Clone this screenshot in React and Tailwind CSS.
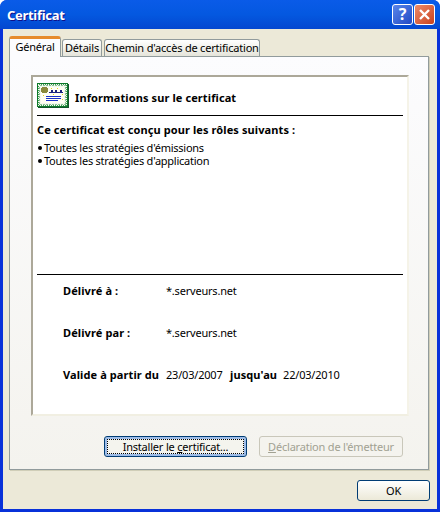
import React from "react";

const font = { fontFamily: '"Noto Sans", Tahoma, sans-serif' };

function Cert() {
  return (
    <svg width="32" height="25" viewBox="0 0 32 25" shapeRendering="crispEdges" className="shrink-0">
      <rect x="0" y="0" width="31" height="24" fill="#0d7a2a" />
      <rect x="31" y="1" width="1" height="24" fill="#14532d" />
      <rect x="1" y="24" width="31" height="1" fill="#14532d" />
      <rect x="1" y="1" width="29" height="22" fill="#f4f8ee" />
      <rect x="1.5" y="1.5" width="28" height="21" fill="none" stroke="#3f9a55" strokeWidth="1" strokeDasharray="1 1" />
      <rect x="2.5" y="2.5" width="26" height="19" fill="none" stroke="#8ac496" strokeWidth="1" strokeDasharray="2 1" />
      <rect x="4" y="4" width="23" height="16" fill="#fffff4" />
      <rect x="5" y="4" width="5" height="6" fill="#8a8a3c" />
      <rect x="4" y="5" width="7" height="4" fill="#8a8a3c" />
      <path d="M12 9h2V7h2v2h2V7h2v2h3V7h2v2h1v1H12z" fill="#1a237e" />
      <rect x="9" y="13" width="15" height="1" fill="#1a33c8" />
      <rect x="9" y="15" width="15" height="1" fill="#1a33c8" />
      <rect x="9" y="17" width="12" height="1" fill="#1a33c8" />
      <rect x="14" y="5" width="1" height="1" fill="#e5d820" />
      <rect x="20" y="5" width="1" height="1" fill="#e5d820" />
      <rect x="25" y="11" width="1" height="1" fill="#e5d820" />
      <rect x="6" y="12" width="1" height="1" fill="#e5d820" />
      <rect x="25" y="16" width="1" height="1" fill="#e5d820" />
      <rect x="16" y="11" width="1" height="1" fill="#e5d820" />
    </svg>
  );
}

function Field({ label, value, className }) {
  return (
    <div className={"flex " + className}>
      <span className="w-[103px] font-bold tracking-[0.1px]">{label}</span>
      <span>{value}</span>
    </div>
  );
}

function Bullet({ children }) {
  return (
    <div className="flex h-[13px] items-center tracking-[-0.25px]">
      <div className="w-[4px] h-[4px] rounded-full bg-black ml-[1px] mr-[2px] shrink-0" />
      <span>{children}</span>
    </div>
  );
}

export default function App() {
  return (
    <div style={font} className="w-[440px] h-[512px] overflow-hidden flex flex-col bg-[#0831d9] rounded-t-[7px] text-[11px] leading-[13px] tracking-[-0.2px] text-black">
      <div className="h-[29px] shrink-0 flex items-center pl-[7px] pr-[5px] bg-gradient-to-b from-[#0a5be8] via-[#0458e0] to-[#0447d0]">
        <span className="text-white font-bold text-[13px] tracking-[-0.3px] pt-[2px] [text-shadow:1px_1px_0_#0f1089]">Certificat</span>
        <div className="ml-auto flex gap-[1px]">
          <div className="w-[21px] h-[21px] rounded-[3px] border border-white bg-gradient-to-br from-[#5a86ea] to-[#2348c4] flex items-center justify-center text-white font-bold text-[16px]">?</div>
          <div className="w-[21px] h-[21px] rounded-[3px] border border-white bg-gradient-to-br from-[#ec8a68] to-[#c8401a] flex items-center justify-center">
            <svg width="13" height="13" viewBox="0 0 13 13"><path d="M2 2l9 9M11 2l-9 9" stroke="#fff" strokeWidth="2.4" /></svg>
          </div>
        </div>
      </div>
      <div className="flex-1 mx-[3px] mb-[3px] bg-[#ece9d8] flex flex-col px-[6px] pt-[7px]">
        <div className="flex items-end h-[20px] relative z-10">
          <div className="w-[52px] h-[21px] -mb-px pb-[3px] border-x border-[#919b9c] border-t-[3px] border-t-[#e68b2c] rounded-t-[3px] bg-[#fcfcfe] flex items-center justify-center">Général</div>
          <div className="ml-px w-[40px] h-[17px] pb-[1px] border border-b-0 border-[#919b9c] rounded-t-[3px] bg-gradient-to-b from-white to-[#e5e4da] flex items-center justify-center whitespace-nowrap">Détails</div>
          <div className="ml-[2px] w-[156px] h-[17px] pb-[1px] border border-b-0 border-[#919b9c] rounded-t-[3px] bg-gradient-to-b from-white to-[#e5e4da] flex items-center justify-center whitespace-nowrap">Chemin d'accès de certification</div>
        </div>
        <div className="w-[420px] h-[414px] border border-[#919b9c] shadow-[1px_1px_0_#d0ceb8] bg-gradient-to-b from-[#fcfcfe] to-[#f4f3ee] flex flex-col px-[21px] pt-[18px]">
          <div className="w-[378px] h-[341px] bg-white border-2 border-t-[#aca899] border-l-[#aca899] border-r-[#f5f3e8] border-b-[#f1efe2] flex flex-col px-[4px] pt-[3px]">
            <div className="flex items-center h-[30px] gap-[6px]">
              <Cert />
              <span className="font-bold tracking-[0.1px] pt-[5px]">Informations sur le certificat</span>
            </div>
            <div className="mt-[5px] h-px bg-black w-[366px]" />
            <div className="font-bold tracking-[0.1px] mt-[7px]">Ce certificat est conçu pour les rôles suivants :</div>
            <div className="mt-[5px] flex flex-col">
              <Bullet>Toutes les stratégies d'émissions</Bullet>
              <Bullet>Toutes les stratégies d'application</Bullet>
            </div>
            <div className="mt-[107px] h-px bg-black w-[366px]" />
            <div className="pl-[26px] flex flex-col">
              <Field label="Délivré à :" value="*.serveurs.net" className="mt-[9px]" />
              <Field label="Délivré par :" value="*.serveurs.net" className="mt-[29px]" />
              <div className="flex mt-[29px]">
                <span className="font-bold tracking-[0.1px] w-[103px]">Valide à partir du</span>
                <span className="w-[58px]">23/03/2007</span>
                <span className="font-bold tracking-[0.1px] ml-[6px]">jusqu'au</span>
                <span className="ml-[6px]">22/03/2010</span>
              </div>
            </div>
          </div>
          <div className="flex mt-[20px] ml-[73px] gap-[12px]">
            <div className="w-[143px] h-[21px] rounded-[3px] border border-[#003c74] shadow-[inset_0_0_0_2px_#9dbce8] bg-[#f4f4ee] flex items-center justify-center relative">
              <span>Installer le <u>c</u>ertificat...</span>
              <div className="absolute inset-[2px] border border-dotted border-black" />
            </div>
            <div className="w-[144px] h-[21px] rounded-[3px] border border-[#c9c7ba] bg-[#f4f3ee] text-[#a1a192] flex items-center justify-center">
              <span><u>D</u>éclaration de l'émetteur</span>
            </div>
          </div>
        </div>
        <div className="flex justify-end mt-[10px] pr-[1px]">
          <div className="w-[73px] h-[21px] rounded-[3px] border border-[#003c74] bg-gradient-to-b from-white to-[#ece9d8] flex items-center justify-center">OK</div>
        </div>
      </div>
    </div>
  );
}
